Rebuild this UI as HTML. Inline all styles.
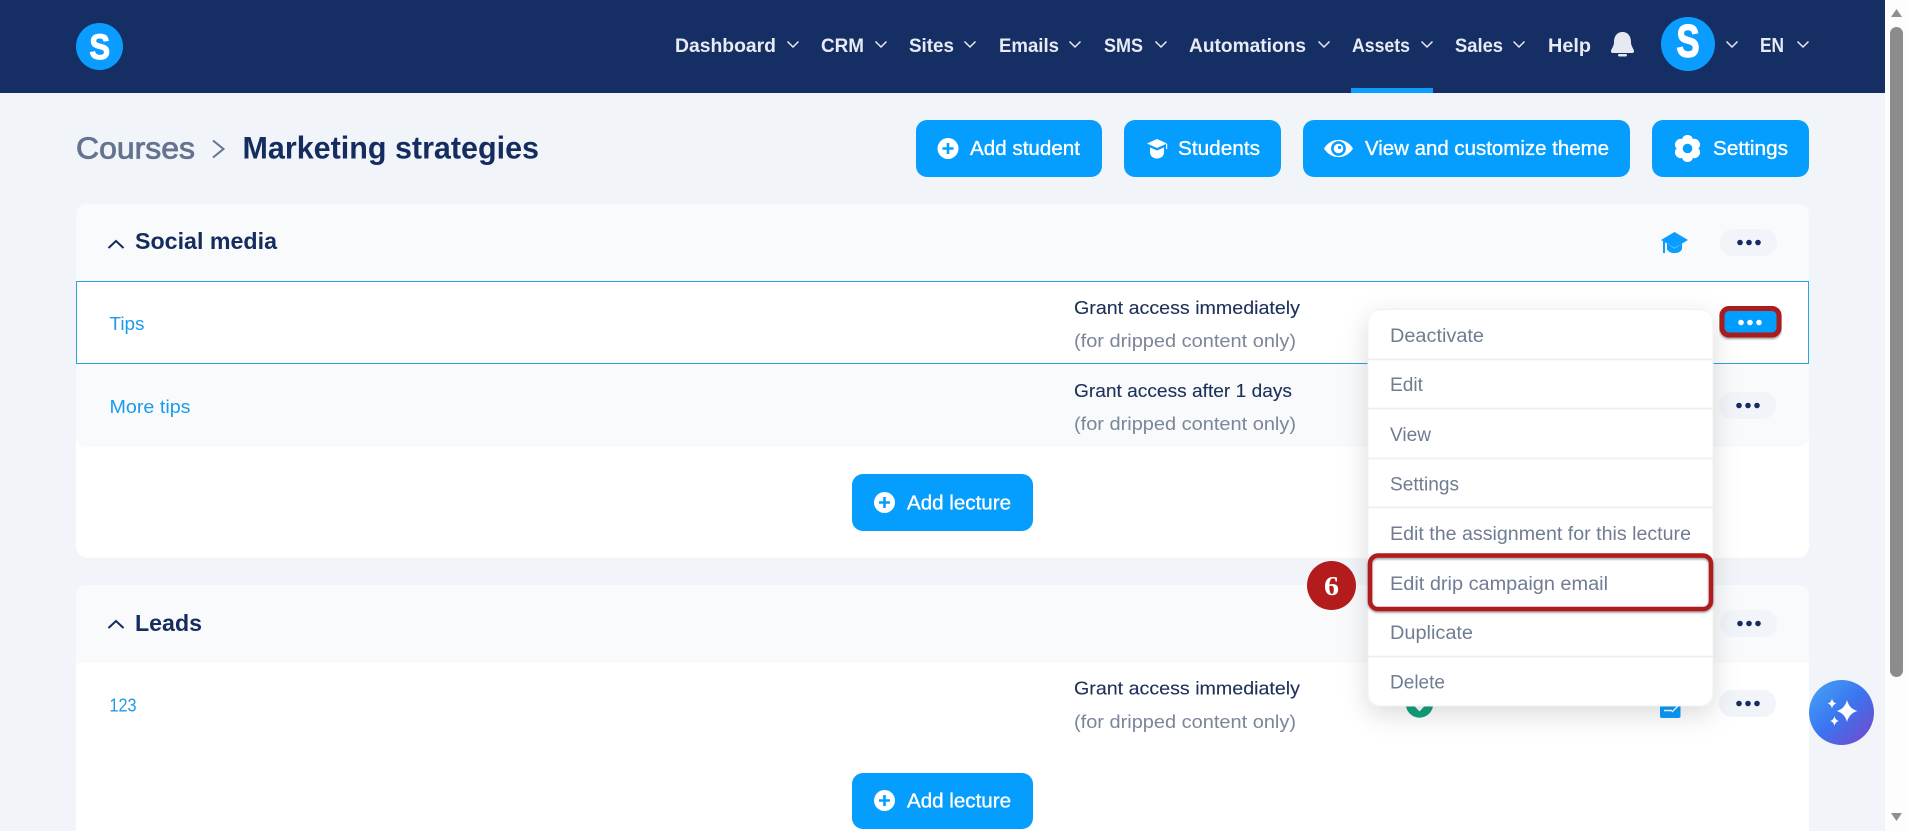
<!DOCTYPE html>
<html lang="en">
<head>
<meta charset="utf-8">
<title>Marketing strategies</title>
<style>
html,body{margin:0;padding:0;background:#f1f4f9;overflow:hidden}
svg{display:block;position:absolute;left:0;top:0}
text{font-family:"Liberation Sans",Arial,sans-serif}
.nav{font-size:19px;font-weight:700;fill:#e8ebf4}
.btn{font-size:20px;fill:#fff;stroke:#fff;stroke-width:.35}
.link{font-size:18.5px;fill:#1b9be9}
.g1{font-size:18.5px;fill:#1e3159;stroke:#1e3159;stroke-width:.12}
.g2{font-size:18.5px;fill:#7b8698}
.mi{font-size:19px;fill:#707c91}
.h2{font-size:23.5px;font-weight:700;fill:#152c5e}
.chev{fill:none;stroke:#e8ebf4;stroke-width:1.5}
.up{fill:none;stroke:#152c5e;stroke-width:2}
.line{stroke:#eceef1;stroke-width:1.4}
</style>
</head>
<body>
<svg width="1908" height="831" viewBox="0 0 1908 831" xmlns="http://www.w3.org/2000/svg">
<defs>
<filter id="menuShadow" x="-20%" y="-20%" width="140%" height="140%"><feDropShadow dx="0" dy="8" stdDeviation="13" flood-color="#000" flood-opacity=".14"/></filter>
<filter id="redShadow" x="-5%" y="-20%" width="110%" height="140%"><feDropShadow dx="0" dy="1.5" stdDeviation="1" flood-color="#000" flood-opacity=".4"/></filter>
<linearGradient id="ai" x1="0" y1="0" x2="1" y2="1"><stop offset="0" stop-color="#45a6f5"/><stop offset=".5" stop-color="#3b74f1"/><stop offset="1" stop-color="#7a45c8"/></linearGradient>
</defs>

<!-- page + scrollbar -->
<rect x="0" y="0" width="1885" height="831" fill="#f1f4f9"/>
<rect x="1885" y="0" width="23" height="831" fill="#fdfdfd"/>
<path d="M1896.5 9 L1902 17 L1891 17 Z" fill="#8f8f8f"/>
<rect x="1890" y="27" width="13" height="650" rx="6.5" fill="#8c8c8c"/>
<path d="M1891 813 L1902 813 L1896.5 821 Z" fill="#8f8f8f"/>

<!-- header -->
<rect x="0" y="0" width="1885" height="93" fill="#152e63"/>
<circle cx="99.5" cy="46.5" r="23.5" fill="#0a9dff"/>
<text x="89.5" y="59" font-size="35" font-weight="700" fill="#fff" stroke="#fff" stroke-width="1.2" textLength="20.5" lengthAdjust="spacingAndGlyphs">S</text>

<text class="nav" x="675" y="52" textLength="101" lengthAdjust="spacingAndGlyphs">Dashboard</text>
<path class="chev" d="M787.5 41.5 L793 47 L798.5 41.5"/>
<text class="nav" x="821" y="52" textLength="43" lengthAdjust="spacingAndGlyphs">CRM</text>
<path class="chev" d="M875.5 41.5 L881 47 L886.5 41.5"/>
<text class="nav" x="909" y="52" textLength="45" lengthAdjust="spacingAndGlyphs">Sites</text>
<path class="chev" d="M964.5 41.5 L970 47 L975.5 41.5"/>
<text class="nav" x="999" y="52" textLength="60" lengthAdjust="spacingAndGlyphs">Emails</text>
<path class="chev" d="M1069.5 41.5 L1075 47 L1080.5 41.5"/>
<text class="nav" x="1104" y="52" textLength="39" lengthAdjust="spacingAndGlyphs">SMS</text>
<path class="chev" d="M1155.5 41.5 L1161 47 L1166.5 41.5"/>
<text class="nav" x="1189" y="52" textLength="117" lengthAdjust="spacingAndGlyphs">Automations</text>
<path class="chev" d="M1318.5 41.5 L1324 47 L1329.5 41.5"/>
<text class="nav" x="1352" y="52" textLength="58" lengthAdjust="spacingAndGlyphs">Assets</text>
<path class="chev" d="M1421.5 41.5 L1427 47 L1432.5 41.5"/>
<text class="nav" x="1455" y="52" textLength="48" lengthAdjust="spacingAndGlyphs">Sales</text>
<path class="chev" d="M1513.5 41.5 L1519 47 L1524.5 41.5"/>
<text class="nav" x="1548" y="52" textLength="43" lengthAdjust="spacingAndGlyphs">Help</text>
<path d="M1622.5 32 C1628.5 32 1631 37 1631 42 C1631 47 1634 48.5 1634 51.5 Q1634 53 1632 53 L1613 53 Q1611 53 1611 51.5 C1611 48.5 1614 47 1614 42 C1614 37 1616.5 32 1622.5 32Z" fill="#e6e9f1"/>
<rect x="1618" y="54" width="9" height="2.5" rx="1.2" fill="#e6e9f1"/>
<circle cx="1688" cy="44" r="27" fill="#0a9dff"/>
<text x="1676.5" y="56.5" font-size="45" font-weight="700" fill="#fff" stroke="#fff" stroke-width="1.6" textLength="23" lengthAdjust="spacingAndGlyphs">S</text>
<path class="chev" d="M1726.5 41.5 L1732 47 L1737.5 41.5"/>
<text class="nav" x="1760" y="52" font-size="21" style="font-size:20px" textLength="24" lengthAdjust="spacingAndGlyphs">EN</text>
<path class="chev" d="M1797.5 41.5 L1803 47 L1808.5 41.5"/>
<rect x="1351" y="88" width="82" height="5" fill="#0a9dff"/>

<!-- breadcrumb -->
<text x="76" y="158.5" font-size="31" fill="#64748f" stroke="#64748f" stroke-width=".8" textLength="119" lengthAdjust="spacingAndGlyphs">Courses</text>
<path d="M213 140.5 L223.5 149 L213 157.5" fill="none" stroke="#64748f" stroke-width="2"/>
<text x="242.5" y="158.5" font-size="31.5" font-weight="700" fill="#152c5e" textLength="296.5" lengthAdjust="spacingAndGlyphs">Marketing strategies</text>

<!-- top buttons -->
<rect x="916" y="120" width="186" height="57" rx="11" fill="#059eff"/>
<circle cx="948" cy="148.5" r="10.5" fill="#fff"/>
<path d="M942.5 148.5 H953.5 M948 143 V154" stroke="#059eff" stroke-width="2.6"/>
<text class="btn" x="970" y="155" textLength="110" lengthAdjust="spacingAndGlyphs">Add student</text>

<rect x="1124" y="120" width="157" height="57" rx="11" fill="#059eff"/>
<path d="M1147 143.5 L1157 139 L1167 143.5 L1157 148 Z" fill="#fff"/>
<path d="M1150 147.5 L1157 150.5 L1164 147.5 V152 C1164 156 1161 158.5 1157 158.5 C1153 158.5 1150 156 1150 152 Z" fill="#fff"/>
<rect x="1166" y="144" width="1.2" height="5" fill="#fff"/>
<text class="btn" x="1178" y="155" textLength="82" lengthAdjust="spacingAndGlyphs">Students</text>

<rect x="1303" y="120" width="327" height="57" rx="11" fill="#059eff"/>
<path d="M1324 148.5 C1331 137 1346 137 1353 148.5 C1346 160 1331 160 1324 148.5Z" fill="#fff"/>
<circle cx="1338.5" cy="148.5" r="7.4" fill="#059eff"/>
<circle cx="1338.5" cy="148.5" r="4.8" fill="#fff"/>
<circle cx="1339.5" cy="147.5" r="1.6" fill="#059eff"/>
<text class="btn" x="1365" y="155" textLength="244" lengthAdjust="spacingAndGlyphs">View and customize theme</text>

<rect x="1652" y="120" width="157" height="57" rx="11" fill="#059eff"/>
<g transform="translate(1687.5 148.5)" fill="#fff">
<circle r="10"/>
<rect x="-5.5" y="-13.5" width="11" height="27" rx="5"/>
<rect x="-5.5" y="-13.5" width="11" height="27" rx="5" transform="rotate(60)"/>
<rect x="-5.5" y="-13.5" width="11" height="27" rx="5" transform="rotate(120)"/>
<circle r="4.8" fill="#059eff"/>
</g>
<text class="btn" x="1713" y="155" textLength="75" lengthAdjust="spacingAndGlyphs">Settings</text>

<!-- card 1 -->
<rect x="76" y="204" width="1733" height="354" rx="12" fill="#fff"/>
<path d="M76 281 V216 Q76 204 88 204 H1797 Q1809 204 1809 216 V281 Z" fill="#f8fafc"/>
<path class="up" d="M108.500 248 L116 241 L123.500 248"/>
<text class="h2" x="135" y="249" textLength="142" lengthAdjust="spacingAndGlyphs">Social media</text>
<path d="M1661 240 L1674.5 232 L1688 240 L1674.5 248 Z" fill="#0a9dff"/>
<path d="M1667 243.5 L1674.5 248.5 L1682 243.5 V249 C1680 254.5 1669 254.5 1667 249 Z" fill="#0a9dff"/>
<rect x="1663" y="241" width="2" height="12" fill="#0a9dff"/>
<rect x="1720" y="229" width="57" height="27" rx="13" fill="#f1f4f9"/>
<g fill="#152c5e"><circle cx="1740" cy="242.5" r="2.8"/><circle cx="1749" cy="242.5" r="2.8"/><circle cx="1758" cy="242.5" r="2.8"/></g>

<!-- row tips -->
<rect x="76.5" y="281.500" width="1732" height="82" fill="#fff" stroke="#2aa5d9" stroke-width="1"/>
<text class="link" x="109.500" y="330" textLength="35" lengthAdjust="spacingAndGlyphs">Tips</text>
<text class="g1" x="1074" y="314" textLength="226" lengthAdjust="spacingAndGlyphs">Grant access immediately</text>
<text class="g2" x="1074" y="347" textLength="222" lengthAdjust="spacingAndGlyphs">(for dripped content only)</text>

<!-- row more tips -->
<path d="M76 364 H1809 V435 Q1809 447 1797 447 H88 Q76 447 76 435 Z" fill="#f8fafc"/>
<text class="link" x="109.500" y="413" textLength="81" lengthAdjust="spacingAndGlyphs">More tips</text>
<text class="g1" x="1074" y="397" textLength="218" lengthAdjust="spacingAndGlyphs">Grant access after 1 days</text>
<text class="g2" x="1074" y="430" textLength="222" lengthAdjust="spacingAndGlyphs">(for dripped content only)</text>
<rect x="1719" y="392" width="57" height="27" rx="13" fill="#f1f4f9"/>
<g fill="#152c5e"><circle cx="1739" cy="405.5" r="2.8"/><circle cx="1748" cy="405.5" r="2.8"/><circle cx="1757" cy="405.5" r="2.8"/></g>

<rect x="852" y="474" width="181" height="57" rx="11" fill="#059eff"/>
<circle cx="884.5" cy="502.5" r="10.5" fill="#fff"/>
<path d="M879 502.5 H890 M884.5 497 V508" stroke="#059eff" stroke-width="2.6"/>
<text class="btn" x="907" y="509.5" textLength="104" lengthAdjust="spacingAndGlyphs">Add lecture</text>

<!-- card 2 -->
<path d="M76 831 V597 Q76 585 88 585 H1797 Q1809 585 1809 597 V831 Z" fill="#fff"/>
<path d="M76 663 V597 Q76 585 88 585 H1797 Q1809 585 1809 597 V663 Z" fill="#f8fafc"/>
<path class="up" d="M108.500 628 L116 621 L123.500 628"/>
<text class="h2" x="135" y="631" textLength="67" lengthAdjust="spacingAndGlyphs">Leads</text>
<rect x="1720" y="610" width="57" height="27" rx="13" fill="#f1f4f9"/>
<g fill="#152c5e"><circle cx="1740" cy="623.5" r="2.8"/><circle cx="1749" cy="623.5" r="2.8"/><circle cx="1758" cy="623.5" r="2.8"/></g>

<text class="link" x="109.500" y="711.5" textLength="27" lengthAdjust="spacingAndGlyphs">123</text>
<text class="g1" x="1074" y="694.5" textLength="226" lengthAdjust="spacingAndGlyphs">Grant access immediately</text>
<text class="g2" x="1074" y="728" textLength="222" lengthAdjust="spacingAndGlyphs">(for dripped content only)</text>
<circle cx="1419.5" cy="704" r="13.7" fill="#12a27c"/>
<path d="M1411.500 703 L1419.5 711.500 L1427.500 703 Z" fill="#fff"/>
<rect x="1660" y="692" width="20.5" height="26" rx="2" fill="#0a9dff"/>
<path d="M1664 710.500 H1672 M1672 712 L1678 706" stroke="#fff" stroke-width="1.4" fill="none"/>
<rect x="1719" y="690" width="57" height="27" rx="13" fill="#f1f4f9"/>
<g fill="#152c5e"><circle cx="1739" cy="703.5" r="2.8"/><circle cx="1748" cy="703.5" r="2.8"/><circle cx="1757" cy="703.5" r="2.8"/></g>

<rect x="852" y="773" width="181" height="56" rx="11" fill="#059eff"/>
<circle cx="884.5" cy="800.5" r="10.5" fill="#fff"/>
<path d="M879 800.5 H890 M884.5 795 V806" stroke="#059eff" stroke-width="2.6"/>
<text class="btn" x="907" y="807.5" textLength="104" lengthAdjust="spacingAndGlyphs">Add lecture</text>

<!-- highlighted dots button -->
<rect x="1722" y="308.5" width="57" height="26.5" rx="7" fill="#059eff" stroke="#ab1a1e" stroke-width="5" filter="url(#redShadow)"/>
<g fill="#fff"><circle cx="1741" cy="322.5" r="2.8"/><circle cx="1750" cy="322.5" r="2.8"/><circle cx="1759" cy="322.5" r="2.8"/></g>

<!-- dropdown -->
<rect x="1367.5" y="309" width="346" height="397.500" rx="13" fill="#fff" filter="url(#menuShadow)"/>
<rect x="1368" y="309.5" width="345" height="396.500" rx="13" fill="none" stroke="#f0f1f3" stroke-width="1"/>
<path class="line" d="M1368 359.5 H1713 M1368 408.5 H1713 M1368 458.5 H1713 M1368 507.5 H1713 M1368 656.5 H1713"/>
<text class="mi" x="1390" y="342" textLength="94" lengthAdjust="spacingAndGlyphs">Deactivate</text>
<text class="mi" x="1390" y="391" textLength="33" lengthAdjust="spacingAndGlyphs">Edit</text>
<text class="mi" x="1390" y="441" textLength="41" lengthAdjust="spacingAndGlyphs">View</text>
<text class="mi" x="1390" y="490.5" textLength="69" lengthAdjust="spacingAndGlyphs">Settings</text>
<text class="mi" x="1390" y="540" textLength="301" lengthAdjust="spacingAndGlyphs">Edit the assignment for this lecture</text>
<text class="mi" x="1390" y="590" textLength="218" lengthAdjust="spacingAndGlyphs">Edit drip campaign email</text>
<text class="mi" x="1390" y="639" textLength="83" lengthAdjust="spacingAndGlyphs">Duplicate</text>
<text class="mi" x="1390" y="688.5" textLength="55" lengthAdjust="spacingAndGlyphs">Delete</text>

<!-- step highlight -->
<rect x="1370" y="555.5" width="341" height="53.5" rx="8" fill="none" stroke="#b01c1e" stroke-width="4.5" filter="url(#redShadow)"/>
<circle cx="1331.5" cy="585.5" r="24.5" fill="#b41b1c"/>
<text x="1324" y="595" font-size="27" font-weight="700" fill="#fff" style="font-family:'Liberation Serif',serif" textLength="15" lengthAdjust="spacingAndGlyphs">6</text>

<!-- AI button -->
<circle cx="1841.5" cy="712.5" r="32.5" fill="url(#ai)"/>
<path d="M1847 700 C1848.5 706 1852 709.500 1857.5 711 C1852 712.500 1848.500 716 1847 722 C1845.500 716 1842 712.500 1836.5 711 C1842 709.500 1845.500 706 1847 700Z" fill="#fff"/>
<path d="M1832 698.500 C1832.700 701.500 1834 702.800 1836.500 703.500 C1834 704.200 1832.700 705.500 1832 708.500 C1831.300 705.500 1830 704.200 1827.500 703.500 C1830 702.800 1831.300 701.500 1832 698.500Z" fill="#fff"/>
<path d="M1834.5 716 C1835.200 719 1836.500 720.300 1839 721 C1836.500 721.700 1835.200 723 1834.5 726 C1833.800 723 1832.500 721.700 1830 721 C1832.500 720.300 1833.800 719 1834.5 716Z" fill="#fff"/>
</svg>
</body>
</html>
